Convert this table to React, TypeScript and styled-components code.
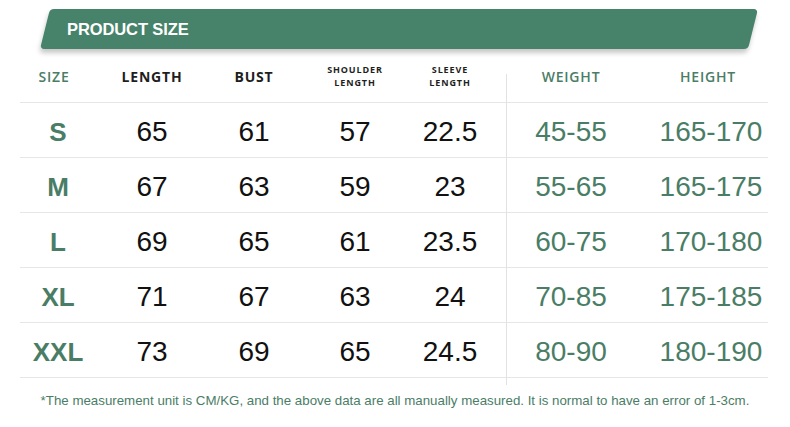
import React from "react";
import styled, { createGlobalStyle } from "styled-components";

const GlobalStyle = createGlobalStyle`
  html, body { margin: 0; padding: 0; background: #ffffff; }
  body { font-family: "Liberation Sans", Arial, sans-serif; }
`;

const GREEN = "#47836a";
const TEXT_GREEN = "#4a7d66";

const Page = styled.div`
  width: 790px;
  height: 427px;
  padding-top: 9px;
  box-sizing: border-box;
  overflow: hidden;
  background: #fff;
`;

const Banner = styled.div`
  position: relative;
  height: 40px;
  margin: 0 37px 0 45px;
  display: flex;
  align-items: center;
  padding-left: 22px;
  &::before {
    content: "";
    position: absolute;
    inset: 0;
    background: ${GREEN};
    border-radius: 4px;
    transform: skewX(-14deg);
    box-shadow: 0 4px 5px rgba(0, 0, 0, 0.22);
  }
`;

const BannerTitle = styled.span`
  position: relative;
  color: #fff;
  font-family: "Liberation Sans", Arial, sans-serif;
  font-weight: 700;
  font-size: 16.5px;
  letter-spacing: -0.1px;
`;

const Table = styled.div`
  position: relative;
  margin: 2px 22px 0 20px;
`;

const Divider = styled.div`
  position: absolute;
  left: 486px;
  top: 23px;
  bottom: -7px;
  width: 1px;
  background: #e2e2e2;
`;

const Row = styled.div<{ $h: number }>`
  display: grid;
  grid-template-columns: 80px 104px 100px 102px 100px 130px 132px;
  height: ${(p) => p.$h}px;
  border-bottom: 1px solid #e6e6e6;
  align-items: center;
`;

const HeadCell = styled.div<{ $green?: boolean; $small?: boolean; $shift?: number }>`
  display: flex;
  flex-direction: column;
  align-items: center;
  font-family: "Open Sans", "Noto Sans", sans-serif;
  color: ${(p) => (p.$green ? TEXT_GREEN : "#1e1e1e")};
  font-size: ${(p) => (p.$small ? "9px" : "14px")};
  line-height: ${(p) => (p.$small ? "12.3px" : "19px")};
  letter-spacing: ${(p) => (p.$small ? "0.9px" : "0.8px")};
  font-weight: ${(p) => (p.$green ? 600 : 700)};
  transform: translateX(${(p) => p.$shift ?? 0}px);
`;

const Cell = styled.div<{ $green?: boolean; $bold?: boolean; $shift?: number }>`
  text-align: center;
  padding-top: 4px;
  font-family: "Liberation Sans", Arial, sans-serif;
  font-size: ${(p) => (p.$bold ? "26px" : "28px")};
  font-weight: ${(p) => (p.$bold ? 700 : 400)};
  color: ${(p) => (p.$green ? TEXT_GREEN : "#111111")};
  transform: translateX(${(p) => p.$shift ?? 0}px);
`;

const Note = styled.div`
  margin-top: 15px;
  text-align: center;
  font-family: "Liberation Sans", Arial, sans-serif;
  font-size: 13.3px;
  line-height: 15px;
  color: ${TEXT_GREEN};
`;

const rows = [
  ["S", "65", "61", "57", "22.5", "45-55", "165-170"],
  ["M", "67", "63", "59", "23", "55-65", "165-175"],
  ["L", "69", "65", "61", "23.5", "60-75", "170-180"],
  ["XL", "71", "67", "63", "24", "70-85", "175-185"],
  ["XXL", "73", "69", "65", "24.5", "80-90", "180-190"],
];

const shifts = [-2, 0, 0, 0, -6, 0, 9];

export default function App() {
  return (
    <Page>
      <GlobalStyle />
      <Banner>
        <BannerTitle>PRODUCT SIZE</BannerTitle>
      </Banner>
      <Table>
        <Divider />
        <Row $h={51}>
          <HeadCell $green $shift={-6}>SIZE</HeadCell>
          <HeadCell>LENGTH</HeadCell>
          <HeadCell>BUST</HeadCell>
          <HeadCell $small>
            <span>SHOULDER</span>
            <span>LENGTH</span>
          </HeadCell>
          <HeadCell $small $shift={-6}>
            <span>SLEEVE</span>
            <span>LENGTH</span>
          </HeadCell>
          <HeadCell $green>WEIGHT</HeadCell>
          <HeadCell $green $shift={6}>HEIGHT</HeadCell>
        </Row>
        {rows.map((r) => (
          <Row key={r[0]} $h={54}>
            {r.map((v, i) => (
              <Cell
                key={i}
                $green={i === 0 || i >= 5}
                $bold={i === 0}
                $shift={shifts[i]}
              >
                {v}
              </Cell>
            ))}
          </Row>
        ))}
      </Table>
      <Note>
        *The measurement unit is CM/KG, and the above data are all manually measured. It is normal to have an error of 1-3cm.
      </Note>
    </Page>
  );
}
